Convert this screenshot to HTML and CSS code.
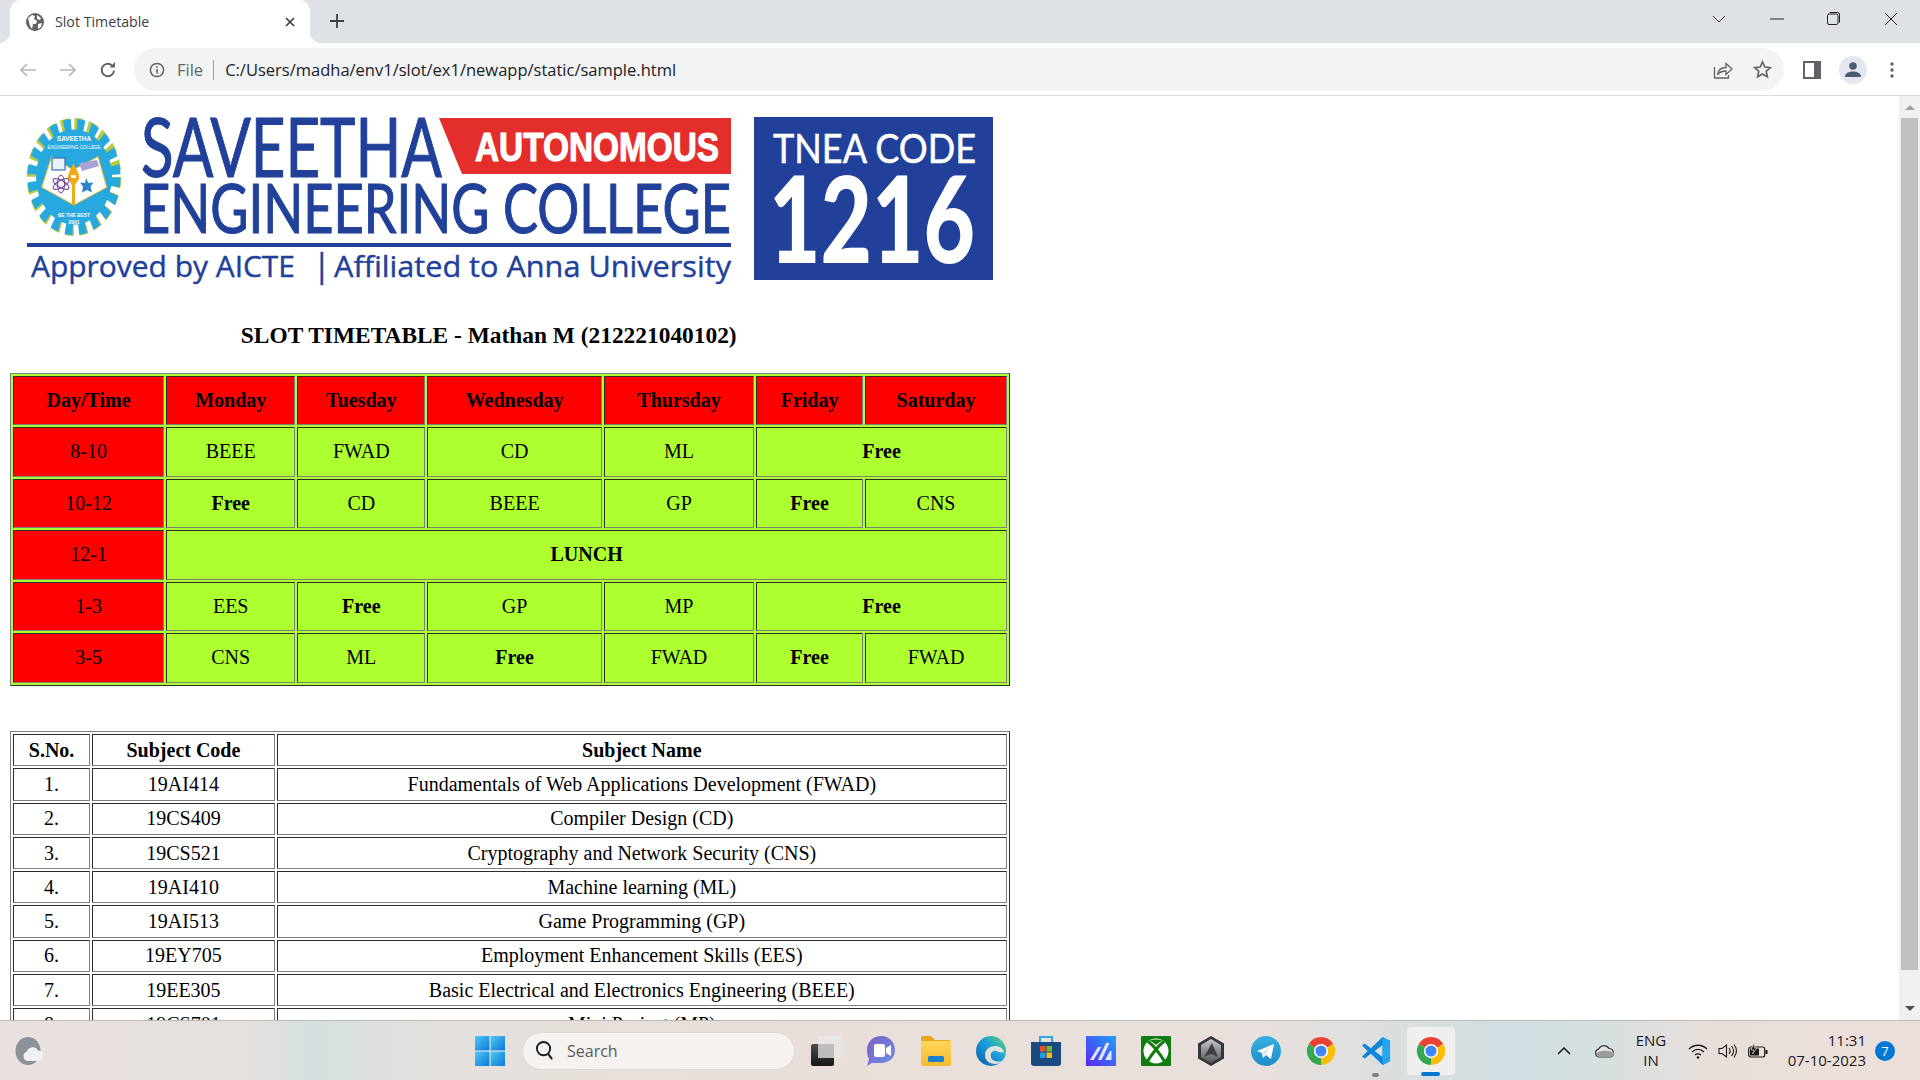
FILE: index.html
```html
<!DOCTYPE html>
<html lang="en">
<head>
<meta charset="utf-8">
<title>Slot Timetable</title>
<link rel="stylesheet" href="styles.css">
</head>
<body>
<svg class="defs" width="0" height="0" aria-hidden="true">
  <symbol id="chrome" viewBox="0 0 32 32">
    <path d="M16 16L3 8.500A15 15 0 0 1 29 8.500Z" fill="#ea4335"/>
    <path d="M16 16L29 8.500A15 15 0 0 1 16 31Z" fill="#fbbc05"/>
    <path d="M16 16L16 31A15 15 0 0 1 3 8.500Z" fill="#34a853"/>
    <circle cx="16" cy="16" r="7.600" fill="#fff"/>
    <circle cx="16" cy="16" r="5.900" fill="#4285f4"/>
  </symbol>
  <linearGradient id="winGrad" x1="0" y1="0" x2="1" y2="1"><stop offset="0" stop-color="#4fc8f8"/><stop offset="1" stop-color="#0a78d6"/></linearGradient>
  <linearGradient id="edgeGrad" x1="0" y1="1" x2="1" y2="0"><stop offset="0" stop-color="#0c59a4"/><stop offset=".55" stop-color="#1e9ee0"/><stop offset="1" stop-color="#5fd85f"/></linearGradient>
  <linearGradient id="appGrad" x1="1" y1="0" x2="0" y2="1"><stop offset="0" stop-color="#1fa2f5"/><stop offset="1" stop-color="#5a25f5"/></linearGradient>
  <linearGradient id="meetGrad" x1="0" y1="0" x2="1" y2="1"><stop offset="0" stop-color="#7b5fc8"/><stop offset="1" stop-color="#6f8fe0"/></linearGradient>
  <linearGradient id="tvGrad" x1="0" y1="0" x2="0" y2="1"><stop offset="0" stop-color="#4a4a4a"/><stop offset="1" stop-color="#161616"/></linearGradient>
  <linearGradient id="folderGrad" x1="0" y1="0" x2="0" y2="1"><stop offset="0" stop-color="#ffd75e"/><stop offset="1" stop-color="#f7b92c"/></linearGradient>
  <linearGradient id="tgGrad" x1="0" y1="0" x2="0" y2="1"><stop offset="0" stop-color="#37aee2"/><stop offset="1" stop-color="#1e8fc6"/></linearGradient>
  <linearGradient id="hexGrad" x1="0" y1="0" x2="0" y2="1"><stop offset="0" stop-color="#c4c8cc"/><stop offset="1" stop-color="#54575b"/></linearGradient>
</svg>

<div class="window">
  <header class="tabstrip">
    <div class="tab">
      <svg class="favicon" viewBox="0 0 18 18" width="18" height="18"><circle cx="9" cy="9" r="9" fill="#5f6368"/><path d="M2 5l4-3 3 1-1 3 3 2-1 3-3 0-1 5-2-3-1-4zM11 2l4 3-1 2-3-1zM12 11l4-1-1 4-3 2z" fill="#fff"/></svg>
      <span class="tab-title">Slot Timetable</span>
      <svg class="tab-close" viewBox="0 0 12 12" width="12" height="12"><path d="M2 2l8 8M10 2l-8 8" stroke="#3c4043" stroke-width="1.700"/></svg>
    </div>
    <svg class="new-tab" viewBox="0 0 16 16" width="16" height="16"><path d="M8 1v14M1 8h14" stroke="#3c4043" stroke-width="1.800"/></svg>
    <div class="win-controls">
      <svg class="wc-chevron" viewBox="0 0 14 8" width="14" height="8"><path d="M1 1l6 6 6-6" fill="none" stroke="#333" stroke-width="1"/></svg>
      <svg class="wc-min" viewBox="0 0 14 2" width="14" height="2"><path d="M0 1h14" stroke="#222" stroke-width="1"/></svg>
      <svg class="wc-max" viewBox="0 0 13 13" width="13" height="13"><rect x=".5" y="2" width="10.500" height="10.500" rx="1.500" fill="none" stroke="#222"/><path d="M2.500.5h8a2 2 0 0 1 2 2v8" fill="none" stroke="#222"/></svg>
      <svg class="wc-close" viewBox="0 0 14 14" width="14" height="14"><path d="M1 1l12 12M13 1L1 13" stroke="#222" stroke-width="1"/></svg>
    </div>
  </header>

  <nav class="toolbar">
    <svg class="tb-back" viewBox="0 0 18 16" width="18" height="16"><path d="M17 8H2M8 2L2 8l6 6" fill="none" stroke="#b6b8ba" stroke-width="1.700"/></svg>
    <svg class="tb-fwd" viewBox="0 0 18 16" width="18" height="16"><path d="M1 8h15M10 2l6 6-6 6" fill="none" stroke="#b6b8ba" stroke-width="1.700"/></svg>
    <svg class="tb-reload" viewBox="0 0 18 18" width="18" height="18"><path d="M15 9.500A6.200 6.200 0 1 1 13.200 4.600" fill="none" stroke="#5f6368" stroke-width="1.900"/><path d="M10.500 6.500h5.500V1z" fill="#5f6368"/></svg>
    <div class="omnibox">
      <svg class="info" viewBox="0 0 16 16" width="16" height="16"><circle cx="8" cy="8" r="6.600" fill="none" stroke="#5f6368" stroke-width="1.500"/><path d="M8 7v4.600" stroke="#5f6368" stroke-width="1.600"/><circle cx="8" cy="4.900" r="1" fill="#5f6368"/></svg>
      <span class="scheme">File</span>
      <span class="sep"></span>
      <span class="url">C:/Users/madha/env1/slot/ex1/newapp/static/sample.html</span>
      <svg class="share" viewBox="0 0 20 18" width="20" height="18"><path d="M1.500 6v11h14v-3" fill="none" stroke="#5f6368" stroke-width="1.300"/><path d="M4.500 14c.5-5 4-7.500 8.500-7.500V2.500l6 5.500-6 5.500V10c-3.500 0-6.500 1-8.500 4z" fill="none" stroke="#5f6368" stroke-width="1.300"/></svg>
      <svg class="star" viewBox="0 0 20 20" width="19" height="19"><path d="M10 2l2.400 5.400 5.900.6-4.400 3.900 1.300 5.800L10 14.700 4.800 17.700l1.300-5.800L1.700 8l5.900-.6z" fill="none" stroke="#5f6368" stroke-width="1.700"/></svg>
    </div>
    <svg class="panel" viewBox="0 0 18 18" width="18" height="18"><rect width="18" height="18" fill="#5f6368"/><rect x="2" y="2" width="9" height="14" fill="#fff"/></svg>
    <div class="avatar"><svg viewBox="0 0 16 16" width="16" height="16"><circle cx="8" cy="4" r="3.800" fill="#4a5a78"/><path d="M0 15c0-4 4-5.500 8-5.500s8 1.500 8 5.500z" fill="#4a5a78"/></svg></div>
    <svg class="kebab" viewBox="0 0 4 16" width="4" height="16"><circle cx="2" cy="2" r="1.700" fill="#5f6368"/><circle cx="2" cy="8" r="1.700" fill="#5f6368"/><circle cx="2" cy="14" r="1.700" fill="#5f6368"/></svg>
  </nav>

  <div class="viewport">
    <main class="page">
      <div class="logos">
        <svg class="logo-main" viewBox="0 0 704 170" width="704" height="170">
          <g transform="translate(47 60) scale(1 1.25)">
            <circle r="42" fill="none" stroke="#b9cb45" stroke-width="10.500" stroke-dasharray="8 5.200"/>
            <circle r="41.500" fill="none" stroke="#27a9e0" stroke-width="10" stroke-dasharray="7.200 6" stroke-dashoffset="-.4"/>
            <circle r="38" fill="#27a9e0"/>
          </g>
          <path d="M24.700 39.700L46 53 71 39.700 79.700 70.300 47 88 14.700 70.300z" fill="#fff" stroke="#f2c230" stroke-width="1"/>
          <path d="M46.500 46L52 58v4l-4 6v20h-3V68l-4-6v-4z" fill="#f0a81e"/>
          <rect x="44" y="58" width="5" height="3" fill="#fff"/>
          <rect x="25" y="41" width="13" height="12" fill="#e8f2fb" stroke="#3a6fb5" stroke-width="1.200"/>
          <g fill="none" stroke="#6d3f98" stroke-width="1"><ellipse cx="34" cy="67" rx="3.500" ry="9"/><ellipse cx="34" cy="67" rx="3.500" ry="9" transform="rotate(60 34 67)"/><ellipse cx="34" cy="67" rx="3.500" ry="9" transform="rotate(-60 34 67)"/></g>
          <path d="M59 61l2.500 5 5-.5-3 4 1.500 6-5-2.500-5 2.500 1-6-3-4 5 .5z" fill="#2b86c9"/>
          <path d="M52 46l18-3 2 6-17 5z" fill="#a6a3d6"/>
          <text class="gear-a" x="47" y="24" text-anchor="middle" textLength="34" lengthAdjust="spacingAndGlyphs">SAVEETHA</text>
          <text class="gear-b" x="47" y="32" text-anchor="middle" textLength="53" lengthAdjust="spacingAndGlyphs">ENGINEERING COLLEGE</text>
          <text class="gear-b gear-bold" x="47" y="100" text-anchor="middle" textLength="32" lengthAdjust="spacingAndGlyphs">BE THE BEST</text>
          <text class="gear-b gear-bold" x="47" y="107" text-anchor="middle" textLength="11" lengthAdjust="spacingAndGlyphs">2001</text>

          <path d="M412 1H704V57H435z" fill="#e42e2b"/>
          <text class="lg-thin lg-heavy" x="114" y="60" font-size="81" textLength="301" lengthAdjust="spacingAndGlyphs">SAVEETHA</text>
          <text class="lg-thin lg-heavy" x="113" y="116" font-size="67" textLength="591" lengthAdjust="spacingAndGlyphs">ENGINEERING COLLEGE</text>
          <text class="lg-auto" x="448" y="44" font-size="41" textLength="244" lengthAdjust="spacingAndGlyphs">AUTONOMOUS</text>
          <rect x="0" y="126" width="704" height="4" fill="#21409a"/>
          <text class="lg-sub" x="4" y="160" font-size="30" textLength="264" lengthAdjust="spacingAndGlyphs">Approved by AICTE</text>
          <text class="lg-sub" x="286" y="160" font-size="32">|</text>
          <text class="lg-sub" x="307" y="160" font-size="30" textLength="397" lengthAdjust="spacingAndGlyphs">Affiliated to Anna University</text>
        </svg>
        <svg class="logo-code" viewBox="0 0 239 163" width="239" height="163">
          <rect width="239" height="163" fill="#21409a"/>
          <text class="lg-thin lg-white" x="19" y="46" font-size="40" textLength="203" lengthAdjust="spacingAndGlyphs">TNEA CODE</text>
          <text class="lg-num" x="15" y="146" font-size="120" textLength="206" lengthAdjust="spacingAndGlyphs">1216</text>
        </svg>
      </div>

      <div class="sheet">
        <h3 class="title">SLOT TIMETABLE - Mathan M (212221040102)</h3>

        <table class="grid timetable">
          <colgroup><col class="t1"><col class="t2"><col class="t3"><col class="t4"><col class="t5"><col class="t6"><col class="t7"></colgroup>
          <tr class="hot"><th>Day/Time</th><th>Monday</th><th>Tuesday</th><th>Wednesday</th><th>Thursday</th><th>Friday</th><th>Saturday</th></tr>
          <tr><td class="hot">8-10</td><td>BEEE</td><td>FWAD</td><td>CD</td><td>ML</td><th colspan="2">Free</th></tr>
          <tr><td class="hot">10-12</td><th>Free</th><td>CD</td><td>BEEE</td><td>GP</td><th>Free</th><td>CNS</td></tr>
          <tr><td class="hot">12-1</td><th colspan="6">LUNCH</th></tr>
          <tr><td class="hot">1-3</td><td>EES</td><th>Free</th><td>GP</td><td>MP</td><th colspan="2">Free</th></tr>
          <tr><td class="hot">3-5</td><td>CNS</td><td>ML</td><th>Free</th><td>FWAD</td><th>Free</th><td>FWAD</td></tr>
        </table>

        <table class="grid subjects">
          <colgroup><col class="s1"><col class="s2"><col class="s3"></colgroup>
          <tr><th>S.No.</th><th>Subject Code</th><th>Subject Name</th></tr>
          <tr><td>1.</td><td>19AI414</td><td>Fundamentals of Web Applications Development (FWAD)</td></tr>
          <tr><td>2.</td><td>19CS409</td><td>Compiler Design (CD)</td></tr>
          <tr><td>3.</td><td>19CS521</td><td>Cryptography and Network Security (CNS)</td></tr>
          <tr><td>4.</td><td>19AI410</td><td>Machine learning (ML)</td></tr>
          <tr><td>5.</td><td>19AI513</td><td>Game Programming (GP)</td></tr>
          <tr><td>6.</td><td>19EY705</td><td>Employment Enhancement Skills (EES)</td></tr>
          <tr><td>7.</td><td>19EE305</td><td>Basic Electrical and Electronics Engineering (BEEE)</td></tr>
          <tr><td>8.</td><td>19CS701</td><td>Mini Project (MP)</td></tr>
        </table>
      </div>
    </main>
    <aside class="scrollbar">
      <span class="arrow-up"></span>
      <span class="thumb"></span>
      <span class="arrow-down"></span>
    </aside>
  </div>

  <footer class="taskbar">
    <svg class="weather" viewBox="0 0 28 28" width="28" height="28"><ellipse cx="13" cy="14" rx="12.500" ry="14" fill="#8b9299"/><path d="M12 24a5 5 0 0 1 0-9.500 6 6 0 0 1 11-1 5.500 5.500 0 0 1 2.500 10.500z" fill="#eef1f3"/></svg>
    <svg class="start" viewBox="0 0 30 30" width="30" height="30"><rect width="14.400" height="14.400" fill="url(#winGrad)"/><rect x="15.600" width="14.400" height="14.400" fill="url(#winGrad)"/><rect y="15.600" width="14.400" height="14.400" fill="url(#winGrad)"/><rect x="15.600" y="15.600" width="14.400" height="14.400" fill="url(#winGrad)"/></svg>
    <div class="search">
      <svg viewBox="0 0 20 22" width="19" height="21"><circle cx="9" cy="9" r="7" fill="none" stroke="#1c1c1c" stroke-width="2"/><path d="M13.500 14l4.500 6" stroke="#1c1c1c" stroke-width="2.200"/></svg>
      <span>Search</span>
    </div>
    <div class="apps">
      <svg viewBox="0 0 30 30" width="30" height="30"><rect y="8" width="23" height="22" rx="2" fill="url(#tvGrad)"/><rect x="7" width="23" height="22" rx="1" fill="#e8e8e6" fill-opacity=".85"/><rect x="7" y="8" width="16" height="14" fill="#bdbdbb"/></svg>
      <svg viewBox="0 0 30 30" width="30" height="30"><path d="M15 0c8 0 14 6 14 14s-6 13-14 13H6l-5 3 2-7C1 20 1 17 1 14 1 6 7 0 15 0z" fill="url(#meetGrad)"/><rect x="8" y="8" width="11" height="13" rx="2" fill="#fff"/><path d="M20 12l5-3v11l-5-3z" fill="#fff"/></svg>
      <svg viewBox="0 0 30 30" width="30" height="30"><path d="M0 2a2 2 0 0 1 2-2h8l4 4h14a2 2 0 0 1 2 2v4H0z" fill="#e8a71c"/><path d="M0 5h30v23a2 2 0 0 1-2 2H2a2 2 0 0 1-2-2z" fill="url(#folderGrad)"/><rect x="7" y="20" width="16" height="6" rx="1.500" fill="#1a7fcf"/></svg>
      <svg viewBox="0 0 30 30" width="30" height="30"><circle cx="15" cy="15" r="15" fill="url(#edgeGrad)"/><path d="M28 16C27 12 23 10 19 10 13 10 9 14 9 19 9 25 14 28 19 28 22 28 25 27 27 25 23 26 16 26 15 21 14 17 17 14 20 15 23 16 26 17 28 16Z" fill="#e3e1dd"/></svg>
      <svg viewBox="0 0 30 30" width="30" height="30"><path d="M9 6V1h12v5" fill="none" stroke="#2aa9e6" stroke-width="2"/><path d="M0 6h30v21a3 3 0 0 1-3 3H3a3 3 0 0 1-3-3z" fill="#1b4a80"/><rect x="9" y="10" width="5.500" height="5.500" fill="#e8512b"/><rect x="15.500" y="10" width="5.500" height="5.500" fill="#7db82a"/><rect x="9" y="16.500" width="5.500" height="5.500" fill="#1ea0e6"/><rect x="15.500" y="16.500" width="5.500" height="5.500" fill="#f6b81a"/></svg>
      <svg viewBox="0 0 30 30" width="30" height="30"><rect width="30" height="30" fill="url(#appGrad)"/><path d="M4 24L12 11h3.500L7.500 24zM12 24L20 7h3.500L15.500 24zM19 24l5-9h1.500v9z" fill="#e4e4ff"/></svg>
      <svg viewBox="0 0 30 30" width="30" height="30"><rect width="30" height="30" rx="1" fill="#107c10"/><circle cx="15" cy="15" r="12.500" fill="#fff"/><path d="M7 5.500C12 9 19 18 24 26M23 5.500C18 9 11 18 6 26" fill="none" stroke="#107c10" stroke-width="3"/><path d="M8 4.500C12 3 18 3 22 4.500 20 5 17 7 15 9 13 7 10 5 8 4.500z" fill="#107c10"/></svg>
      <svg viewBox="0 0 30 30" width="30" height="30"><path d="M15 0L28 7.500v15L15 30 2 22.500v-15z" fill="#34363a"/><path d="M15 3l10 6v12l-10 6-10-6V9z" fill="url(#hexGrad)"/><path d="M16 7L8 21l7-3 7 3z" fill="#3f4145"/></svg>
      <svg viewBox="0 0 30 30" width="30" height="30"><circle cx="15" cy="15" r="15" fill="url(#tgGrad)"/><path d="M6 15L23 8l-3 15-5-4-3 3-1-5z" fill="#fff"/><path d="M11 17l9-7-6 8z" fill="#cde6f3"/></svg>
      <svg viewBox="0 0 32 32" width="30" height="30"><use href="#chrome"/></svg>
      <span class="app-vsc"><svg viewBox="0 0 32 32" width="30" height="30"><path fill-rule="evenodd" d="M23 1L10.500 13 4 8 1 10l6 6-6 6 3 2 6.500-5L23 31l8-4V5zM23 9.500L14.500 16l8.500 6.500z" fill="#0f86d8"/><path fill-rule="evenodd" d="M23 1l8 4v22l-8 4z" fill="#24a7ee"/></svg></span>
      <span class="app-active"><svg viewBox="0 0 32 32" width="30" height="30"><use href="#chrome"/></svg></span>
    </div>
    <div class="tray">
      <svg class="tr-chev" viewBox="0 0 14 8" width="14" height="8"><path d="M1 7l6-6 6 6" fill="none" stroke="#1a1a1a" stroke-width="1.500"/></svg>
      <svg class="tr-cloud" viewBox="0 0 22 14" width="22" height="14"><path d="M5 13a4 4 0 0 1-.5-7.800A6 6 0 0 1 15 4.500 4.500 4.500 0 0 1 17 13z" fill="#e8e4e0" stroke="#333" stroke-width="1.200"/><path d="M2 9.500c3-3 10-4 18-1a4 4 0 0 1-3 4.500H5a4 4 0 0 1-3-3.500z" fill="#9c9c9c"/></svg>
      <div class="lang"><span>ENG</span><span>IN</span></div>
      <svg class="tr-wifi" viewBox="0 0 20 16" width="20" height="16"><path d="M1 6c5-5 13-5 18 0M4 9c3.500-3.500 8.500-3.500 12 0M7 12c1.500-1.500 4.500-1.500 6 0" fill="none" stroke="#1a1a1a" stroke-width="1.300"/><circle cx="10" cy="14.500" r="1.300" fill="#1a1a1a"/></svg>
      <svg class="tr-vol" viewBox="0 0 20 16" width="20" height="16"><path d="M1 5.500h3L8.500 2v12L4 10.500H1z" fill="none" stroke="#1a1a1a" stroke-width="1.100"/><path d="M11 5c1.500 2 1.500 4 0 6M13.500 3c2.500 3 2.500 7 0 10M16 1.500c3 4 3 9 0 13" fill="none" stroke="#1a1a1a" stroke-width="1.100"/></svg>
      <svg class="tr-batt" viewBox="0 0 20 16" width="20" height="16"><rect x=".7" y="4" width="16" height="10" rx="2" fill="none" stroke="#1a1a1a" stroke-width="1.200"/><rect x="17.500" y="7" width="2" height="4" fill="#1a1a1a"/><rect x="2" y="5.500" width="9" height="7" fill="#1a1a1a"/><path d="M6 0L3 7h3L4.500 11 9 5H6.500z" fill="#1a1a1a" stroke="#e8dfda" stroke-width=".6"/></svg>
      <div class="clock"><span>11:31</span><span>07-10-2023</span></div>
      <span class="badge">7</span>
    </div>
  </footer>
</div>
</body>
</html>
```

FILE: styles.css
```css
* { box-sizing: border-box; }
html, body { margin: 0; padding: 0; height: 100%; overflow: hidden; background: #fff; }
.defs { position: absolute; }
svg { display: block; flex: none; }

.window { display: flex; flex-direction: column; height: 100vh; font-family: "Open Sans", "Noto Sans", sans-serif; }

/* tab strip */
.tabstrip { flex: none; height: 43px; background: #dee1e6; display: flex; align-items: center; padding-left: 10px; }
.tab { position: relative; align-self: flex-end; width: 300px; height: 43px; background: #fff; border-radius: 10px 10px 0 0; display: flex; align-items: center; padding: 0 14px 0 16px; }
.tab::before, .tab::after { content: ""; position: absolute; bottom: 0; width: 10px; height: 10px; }
.tab::before { left: -10px; background: radial-gradient(circle at 0 0, #dee1e6 9.5px, #fff 10px); }
.tab::after { right: -10px; background: radial-gradient(circle at 100% 0, #dee1e6 9.5px, #fff 10px); }
.tab-title { margin: 0 0 1px 11px; flex: 1; font-size: 14.200px; color: #3c4043; }
.new-tab { margin: 0 0 2px 19px; }
.win-controls { margin-left: auto; display: flex; align-items: center; padding: 0 22px 6px 0; }
.wc-chevron { margin-right: 44px; }
.wc-min { margin-right: 43px; }
.wc-max { margin-right: 44px; }

/* toolbar */
.toolbar { flex: none; height: 53px; background: #fff; border-bottom: 1px solid #dadce0; display: flex; align-items: center; padding: 1px 0 0 19px; }
.tb-fwd { margin-left: 22px; }
.tb-reload { margin-left: 22px; }
.omnibox { margin-left: 17px; width: 1650px; height: 43px; border-radius: 22px; background: #f1f3f4; display: flex; align-items: center; padding-left: 15px; }
.scheme { margin-left: 12px; font-size: 16.500px; color: #5f6368; }
.sep { margin-left: 10px; width: 1px; height: 20px; background: #9aa0a6; }
.url { margin-left: 11px; font-size: 16.500px; color: #202124; flex: 1; white-space: nowrap; }
.share { margin-right: 20px; }
.star { margin-right: 12px; }
.panel { margin-left: 19px; }
.avatar { margin-left: 18px; width: 28px; height: 28px; border-radius: 50%; background: #e4e7ee; display: flex; align-items: center; justify-content: center; }
.kebab { margin-left: 23px; }

/* viewport */
.viewport { flex: 1; min-height: 0; display: flex; background: #fff; }
.page { flex: 1; min-width: 0; overflow: hidden; padding-top: 21px; }
.logos { display: flex; padding-left: 27px; gap: 23px; height: 170px; }
.logos svg { overflow: visible; }

.scrollbar { flex: none; width: 21px; background: #f1f1f1; display: flex; flex-direction: column; align-items: center; }
.thumb { width: 17px; height: 852px; background: #c1c1c1; margin-top: 8px; }
.arrow-up, .arrow-down { flex: none; width: 0; height: 0; border-left: 5px solid transparent; border-right: 5px solid transparent; }
.arrow-up { margin-top: 9px; border-bottom: 5px solid #a3a3a3; }
.arrow-down { margin-top: 36px; border-top: 5px solid #505050; }

/* logo text */
.lg-thin { font-family: "Lato", "Open Sans", sans-serif; font-weight: 400; fill: #21409a; }
.lg-heavy { stroke: #21409a; stroke-width: 1.100px; }
.lg-white { fill: #fff; stroke: #fff; stroke-width: .5px; }
.lg-auto { font-family: "Liberation Sans", sans-serif; font-weight: 700; fill: #fff; stroke: #fff; stroke-width: 1.200px; }
.lg-sub { font-family: "Open Sans", sans-serif; font-weight: 400; fill: #21409a; stroke: #21409a; stroke-width: .4px; }
.lg-num { font-family: "Lato", sans-serif; font-weight: 900; fill: #fff; }
.gear-a { font-family: "Liberation Sans", sans-serif; font-size: 8px; font-weight: 700; fill: #fff; }
.gear-b { font-family: "Liberation Sans", sans-serif; font-size: 6px; fill: #fff; }
.gear-bold { font-weight: 700; }

/* document, at the browser's 125% page zoom */
.sheet { zoom: 1.25; padding-left: 8px; font-family: "Liberation Serif", "Times New Roman", serif; color: #000; }
.title { margin: 28.200px 0 0; width: 766px; height: 40.300px; text-align: center; font-size: 18.720px; font-weight: 700; line-height: 21px; }
.grid { table-layout: fixed; width: 800px; border: 1px outset #808080; border-spacing: 2px; border-collapse: separate; font-size: 16px; }
.grid th, .grid td { border: 1px inset #808080; text-align: center; padding: 0; }
.timetable { background: #adff2f; }
.timetable th, .timetable td { padding: 9.800px 0; }
.hot th, td.hot { background: #f00; }
.subjects { margin-top: 36.400px; }
.subjects th, .subjects td { padding: 2.900px 0; }
col.t1 { width: 120.400px; } col.t2 { width: 102.800px; } col.t3 { width: 102px; } col.t4 { width: 139px; } col.t5 { width: 119.600px; } col.t6 { width: 85.200px; } col.t7 { width: 113px; }
col.s1 { width: 61.600px; } col.s2 { width: 145.600px; } col.s3 { width: 582.800px; }

/* taskbar */
.taskbar { flex: none; height: 60px; border-top: 1px solid #bdbbb8; display: flex; align-items: center; background: linear-gradient(90deg, #e9e1dd 0, #e6e1dd 240px, #d6e0e1 310px, #e4e0dc 440px, #e9dfda 800px, #e8e0dc 1250px, #d2dee1 1500px, #d5dfe1 1590px, #e9dfda 1720px, #ebdfda 1920px); }
.weather { margin-left: 15px; }
.start { margin-left: 432px; }
.search { margin-left: 17px; width: 273px; height: 38px; border-radius: 19px; background: #f5f2ef; border: 1px solid #dcd8d4; display: flex; align-items: center; padding-left: 12px; font-size: 16px; color: #5c5c5c; }
.search span { margin-left: 13px; }
.apps { margin-left: 16px; display: flex; align-items: center; gap: 25px; }
.app-vsc, .app-active { position: relative; display: block; }
.app-vsc::after { content: ""; position: absolute; left: 11px; top: 37px; width: 7px; height: 4px; border-radius: 2px; background: #808080; }
.app-active::before { content: ""; position: absolute; left: -9px; right: -9px; top: -9px; bottom: -9px; background: #f1efed; border-radius: 4px; }
.app-active::after { content: ""; position: absolute; left: 5px; top: 36px; width: 19px; height: 4px; border-radius: 2px; background: #0078d4; }
.app-active svg { position: relative; }
.tray { margin-left: auto; display: flex; align-items: center; color: #1a1a1a; font-size: 15px; }
.tr-cloud { margin-left: 23px; }
.lang { width: 42px; margin: 0 0 2px 14.500px; display: flex; flex-direction: column; align-items: center; line-height: 20px; }
.tr-wifi { margin-left: 16px; }
.tr-vol { margin-left: 10px; }
.tr-batt { margin-left: 10px; }
.clock { margin: 0 0 2px 8px; width: 90px; display: flex; flex-direction: column; align-items: flex-end; line-height: 20px; }
.badge { margin: 0 25px 0 9px; width: 20px; height: 20px; border-radius: 50%; background: #0078d4; color: #fff; font-size: 13px; display: flex; align-items: center; justify-content: center; }
```
